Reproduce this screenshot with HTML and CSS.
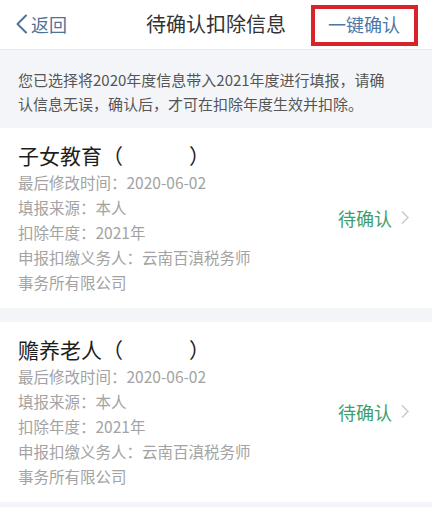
FILE: index.html
```html
<!DOCTYPE html>
<html lang="zh-CN">
<head>
    <meta charset="UTF-8">
    <meta name="viewport" content="width=device-width, initial-scale=1.0">
    <title>待确认扣除信息</title>
    <link rel="stylesheet" href="styles.css">
</head>
<body>

    <div class="top-bar">
        <div class="back">
            <svg class="back-icon" width="13" height="20" viewBox="0 0 13 20">
                <path d="M11 1.5 L2.5 10 L11 18.5" fill="none" stroke="#4f7297" stroke-width="2" stroke-linecap="round" stroke-linejoin="round"/>
            </svg>
            <span>返回</span>
        </div>
        <div class="page-title">待确认扣除信息</div>
        <div class="actions">
            <button class="confirm-all">一键确认</button>
        </div>
    </div>

    <div class="notice">
        您已选择将2020年度信息带入2021年度进行填报，请确认信息无误，确认后，才可在扣除年度生效并扣除。
    </div>

    <div class="card-list">
        <div class="card">
            <div class="info">
                <div class="card-title">子女教育（<span class="blank"></span>）</div>
                <div class="line">最后修改时间：2020-06-02</div>
                <div class="line">填报来源：本人</div>
                <div class="line">扣除年度：2021年</div>
                <div class="line">申报扣缴义务人：云南百滇税务师事务所有限公司</div>
            </div>
            <div class="status">
                <span>待确认</span>
                <svg width="10" height="15" viewBox="0 0 10 15">
                    <path d="M2 1.5 L8 7.5 L2 13.5" fill="none" stroke="#c9c9c9" stroke-width="1.4"/>
                </svg>
            </div>
        </div>

        <div class="card">
            <div class="info">
                <div class="card-title">赡养老人（<span class="blank"></span>）</div>
                <div class="line">最后修改时间：2020-06-02</div>
                <div class="line">填报来源：本人</div>
                <div class="line">扣除年度：2021年</div>
                <div class="line">申报扣缴义务人：云南百滇税务师事务所有限公司</div>
            </div>
            <div class="status">
                <span>待确认</span>
                <svg width="10" height="15" viewBox="0 0 10 15">
                    <path d="M2 1.5 L8 7.5 L2 13.5" fill="none" stroke="#c9c9c9" stroke-width="1.4"/>
                </svg>
            </div>
        </div>
    </div>

</body>
</html>
```

FILE: styles.css
```css
body {
    margin: 0;
    padding: 0;
    font-family: "Noto Sans CJK SC", "Noto Sans", sans-serif;
    background-color: #f4f5f9;
    color: #222;
}

.top-bar {
    display: grid;
    grid-template-columns: 1fr auto 1fr;
    align-items: center;
    height: 49px;
    background-color: #ffffff;
    border-bottom: 1px solid #e6e8ec;
}

.back {
    display: flex;
    align-items: center;
    padding-left: 15px;
    color: #4f7297;
    font-size: 18px;
    padding-bottom: 2px;
}

.back-icon {
    margin-right: 3px;
}

.page-title {
    font-size: 20px;
    color: #333;
    padding-bottom: 2px;
}

.actions {
    display: flex;
    justify-content: flex-end;
    padding-right: 14px;
}

/* highlighted button, red frame from the annotation */
.confirm-all {
    font-family: inherit;
    font-size: 18px;
    color: #4a77a6;
    background: #ffffff;
    border: 4px solid #d9232b;
    height: 41px;
    padding: 0 14px 2px 13px;
    margin-top: 1px;
}

.notice {
    padding: 18px 34px 12px 18px;
    font-size: 15px;
    line-height: 24px;
    color: #555;
}

.card-list {
    display: flex;
    flex-direction: column;
    gap: 14px;
}

.card {
    display: flex;
    align-items: center;
    justify-content: space-between;
    background-color: #ffffff;
    padding: 12px 22px 13px 18px;
}

.info {
    width: 245px;
}

.card-title {
    font-size: 21px;
    line-height: 30px;
    color: #1e1e1e;
}

.blank {
    display: inline-block;
    width: 66px;
}

.line {
    font-size: 15.5px;
    line-height: 25px;
    color: #a3a3a3;
}

.status {
    display: flex;
    align-items: center;
    gap: 8px;
    font-size: 18px;
    color: #3d9e6f;
}
```
